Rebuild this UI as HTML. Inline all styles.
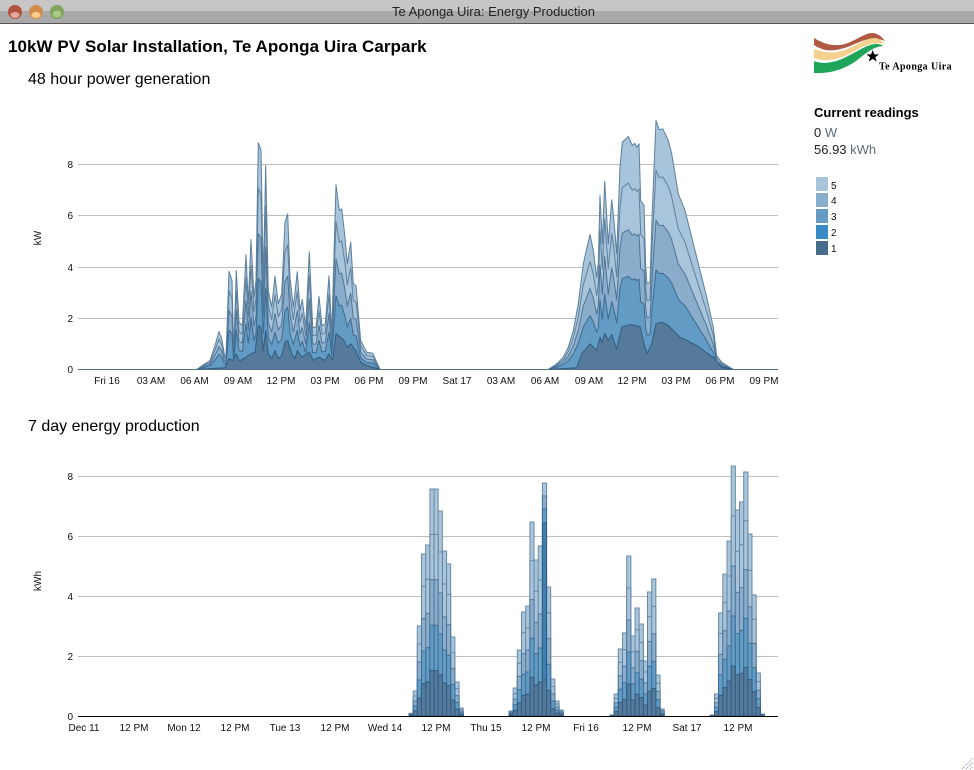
<!DOCTYPE html>
<html><head><meta charset="utf-8"><title>Te Aponga Uira: Energy Production</title>
<style>
html,body{margin:0;padding:0;background:#fff;width:974px;height:770px;overflow:hidden}
svg{display:block;font-family:"Liberation Sans",Arial,sans-serif}
.s{vector-effect:non-scaling-stroke}
.t{font-size:10px;fill:#111}
.m{text-anchor:middle}
.e{text-anchor:end}
.g{stroke:#bdbdbd;stroke-width:1}
</style></head><body>
<svg width="974" height="770" viewBox="0 0 974 770" xmlns="http://www.w3.org/2000/svg">
<defs>
<path id="a" class="s" d="M196.7 0L203.3-4.7 210-9 215-24 219-38 221.7-30.7 224.3-15.7 226-12.3 229-98.3 232-89 233.7-18 236.3-99 239-47.3 242.3-44 246-114.7 248.3-65.7 251-130 254-72.3 256-89 258.3-226.7 261-219 263.3-89 265.7-204 268.3-79 271.7-62.3 275-93.3 278.3-65.7 281.7-75.7 285-147.3 287.7-155.7 290-92.3 293.3-62.3 297.3-97.7 300-59 302.3-70 305.7-42.3 309.3-117.7 312.7-42.3 316-42.3 319-73 322-44 325.3-45.7 329-93.7 331.7-35.7 336-184.7 339.3-159 341.7-160.7 345-132.3 347.3-105.7 350.7-127.3 353.3-85.7 356-84 360.7-29 366.7-17.3 372.7-16.3 380 0Z"/>
<path id="b" class="s" d="M548.3 0L556.7-5.7 563.3-12.3 568.3-22.3 573.3-39 578.3-65.7 583.3-105.7 590-135 593.3-119 596.7-92.3 598.3-105.7 600-174 602.3-125.7 604.7-188.3 608.3-125.7 611.7-169.7 614-149 616.7-115.7 618.3-159 620-202.3 622.3-227.3 628.3-233 632.3-224 634.7-226.3 636.7-222.3 639-225.7 640.7-169 644-164 645.7-102.3 647-85.7 650-87.3 652.3-159 656-249 659.3-239.7 662.7-240.7 668.3-229 671.7-215.7 678.3-175.7 685-159 696.7-112.3 706.7-72.3 713.3-42.3 716.7-14 721.7-7.3 733.3 0Z"/>
<path id="c" class="s" d="M409 0v-2.7h4.17v2.7zM413.2 0v-25h4.17v25zM417.3 0v-90h4.17v90zM421.5 0v-162h4.17v162zM425.7 0v-171h4.17v171zM429.9 0v-227h4.17v227zM434 0v-227h4.17v227zM438.2 0v-205h4.17v205zM442.4 0v-165h4.17v165zM446.5 0v-152h4.17v152zM450.7 0v-79h4.17v79zM454.9 0v-34h4.17v34zM459 0v-8h4.17v8zM509 0v-5h4.17v5zM513.2 0v-28h4.17v28zM517.3 0v-66h4.17v66zM521.5 0v-104h4.17v104zM525.7 0v-110h4.17v110zM529.9 0v-194h4.17v194zM534 0v-156h4.17v156zM538.2 0v-170h4.17v170zM542.4 0v-233h4.17v233zM546.5 0v-129h4.17v129zM550.7 0v-37h4.17v37zM554.9 0v-15h4.17v15zM559 0v-6h4.17v6zM610 0v-1h4.17v1zM614.2 0v-22h4.17v22zM618.3 0v-67h4.17v67zM622.5 0v-83h4.17v83zM626.7 0v-160h4.17v160zM630.9 0v-80h4.17v80zM635 0v-108h4.17v108zM639.2 0v-92h4.17v92zM643.4 0v-55h4.17v55zM647.5 0v-124h4.17v124zM651.7 0v-137h4.17v137zM655.9 0v-41h4.17v41zM660 0v-7h4.17v7zM710.3 0v-1h4.17v1zM714.5 0v-22h4.17v22zM718.6 0v-103h4.17v103zM722.8 0v-142h4.17v142zM727 0v-175h4.17v175zM731.2 0v-250h4.17v250zM735.3 0v-206h4.17v206zM739.5 0v-214h4.17v214zM743.7 0v-244h4.17v244zM747.8 0v-182h4.17v182zM752 0v-121h4.17v121zM756.2 0v-43h4.17v43zM760.3 0v-2h4.17v2z"/>
</defs>

<!-- title bar -->
<rect x="0" y="0" width="974" height="11" fill="#c6c6c6"/>
<rect x="0" y="11" width="974" height="12" fill="#a9a9a9"/>
<rect x="0" y="23" width="974" height="1" fill="#555"/>
<circle cx="15" cy="12" r="7" fill="#b0533f"/><ellipse cx="15" cy="15" rx="4.5" ry="3" fill="#e4a79c"/>
<circle cx="36" cy="12" r="7" fill="#d08c4b"/><ellipse cx="36" cy="15" rx="4.5" ry="3" fill="#fbcf8e"/>
<circle cx="57" cy="12" r="7" fill="#7fa35c"/><ellipse cx="57" cy="14" rx="4.5" ry="3.5" fill="#a8c984"/>
<text x="493.5" y="16" text-anchor="middle" font-size="13" fill="#222">Te Aponga Uira: Energy Production</text>

<!-- headings -->
<text x="8" y="52" font-size="17" font-weight="bold" letter-spacing=".06" fill="#000">10kW PV Solar Installation, Te Aponga Uira Carpark</text>
<text x="28" y="84" font-size="16" fill="#000">48 hour power generation</text>
<text x="28" y="431" font-size="16" fill="#000">7 day energy production</text>

<!-- chart 1 grid -->
<path class="g" d="M78 164.5H778M78 215.5H778M78 267.5H778M78 318.5H778"/>
<text class="t e" x="73" y="168">8</text><text class="t e" x="73" y="219">6</text><text class="t e" x="73" y="271">4</text><text class="t e" x="73" y="322">2</text><text class="t e" x="73" y="373">0</text>
<text class="t m" transform="translate(41,238) rotate(-90)">kW</text>

<!-- chart 1 areas -->
<g stroke="#5b7f9c" stroke-width="1" stroke-linejoin="round">
<g fill="#a7c4db">
<use href="#a" transform="translate(0,369.5)"/><use href="#b" transform="translate(0,369.5)"/>
</g>
<g fill="#a9c5dc" stroke="#5f809c">
<use href="#a" transform="translate(0,369.5) scale(1,.8)"/><use href="#b" transform="translate(0,369.5) scale(1,.8)"/>
</g>
<g fill="#8aadcc" stroke="#4e7395">
<use href="#a" transform="translate(0,369.5) scale(1,.6)"/><use href="#b" transform="translate(0,369.5) scale(1,.6)"/>
</g>
<g fill="#629cc5" stroke="#3d6a90">
<use href="#a" transform="translate(0,369.5) scale(1,.4)"/><use href="#b" transform="translate(0,369.5) scale(1,.4)"/>
</g>
<path fill="#567a99" stroke="#2f5c82" d="M196.7 369.5L225 367.8 229 358.8 232.7 360.5 236.3 353.8 239.3 361.2 246 357.2 251 353.8 255 352.2 258.3 325.5 261 327.2 263.3 350.5 265.7 330.5 268.3 353.8 271.7 358.8 275 350.5 278.3 358.8 281.7 355.5 285 342.2 287.7 340.5 291.7 353.8 295 358.8 297.3 350.5 301.7 357.2 309.3 352.2 313.3 360.5 319 357.2 325 360.5 329 353.8 332.7 360.5 336 333.5 343.3 339.5 347.3 347.2 350.7 343.8 356 350.5 360.7 362.2 366.7 365.5 380 369.5Z"/>
<path fill="#567a99" stroke="#2f5c82" d="M548.3 369.5L576.7 367.8 581.7 353.8 590 343.8 596.7 350.5 600 337.2 602.3 342.2 604.7 333.2 608.3 340.5 611.7 334.5 616.7 348.8 621.7 327.2 630 324.5 640 326.5 644 343.8 647 353.8 651.7 343.8 656 323.8 661.7 322.2 668.3 325.5 680 337.2 696.7 345.5 715 358.8 721.7 367.2 733.3 369.5Z"/>
</g>
<path stroke="#4f6f8c" stroke-width="1" d="M78 369.5H778"/>

<!-- chart 1 x labels -->
<g text-anchor="middle" font-size="10" fill="#111">
<text x="107" y="384">Fri 16</text><text x="151" y="384">03 AM</text><text x="194.5" y="384">06 AM</text><text x="238" y="384">09 AM</text><text x="281" y="384">12 PM</text><text x="325" y="384">03 PM</text><text x="369" y="384">06 PM</text><text x="413" y="384">09 PM</text><text x="457" y="384">Sat 17</text><text x="501" y="384">03 AM</text><text x="545" y="384">06 AM</text><text x="589" y="384">09 AM</text><text x="632" y="384">12 PM</text><text x="676" y="384">03 PM</text><text x="720" y="384">06 PM</text><text x="764" y="384">09 PM</text>
</g>

<!-- chart 2 grid -->
<path class="g" d="M78 476.5H778M78 536.5H778M78 596.5H778M78 656.5H778"/>
<text class="t e" x="73" y="480">8</text><text class="t e" x="73" y="540">6</text><text class="t e" x="73" y="600">4</text><text class="t e" x="73" y="660">2</text><text class="t e" x="73" y="720">0</text>
<text class="t m" transform="translate(41,581) rotate(-90)">kWh</text>

<!-- chart 2 bars -->
<g stroke-width="1">
<use href="#c" transform="translate(0,716)" fill="#a8c5dc" stroke="#6b8aa4"/>
<use href="#c" transform="translate(0,716) scale(1,.8)" fill="#a8c5dc" stroke="#6585a0"/>
<use href="#c" transform="translate(0,716) scale(1,.6)" fill="#8aadcc" stroke="#527797"/>
<use href="#c" transform="translate(0,716) scale(1,.4)" fill="#629cc5" stroke="#3f6d94"/>
<use href="#c" transform="translate(0,716) scale(1,.2)" fill="#567a99" stroke="#2f5c82"/>
<rect x="542.4" y="496" width="4.17" height="13" fill="#8aadcc" stroke="#527797"/>
<rect x="542.4" y="509" width="4.17" height="14" fill="#629cc5" stroke="#3f6d94"/>
<rect x="542.4" y="523" width="4.17" height="157" fill="#3f80b0" stroke="#2f5c82"/>
</g>
<path stroke="#000" stroke-width="1" d="M78 716.5H778"/>

<!-- chart 2 x labels -->
<g text-anchor="middle" font-size="10" fill="#111">
<text x="84" y="731">Dec 11</text><text x="134" y="731">12 PM</text><text x="184" y="731">Mon 12</text><text x="235" y="731">12 PM</text><text x="285" y="731">Tue 13</text><text x="335" y="731">12 PM</text><text x="385" y="731">Wed 14</text><text x="436" y="731">12 PM</text><text x="486" y="731">Thu 15</text><text x="536" y="731">12 PM</text><text x="586" y="731">Fri 16</text><text x="637" y="731">12 PM</text><text x="687" y="731">Sat 17</text><text x="738" y="731">12 PM</text>
</g>

<!-- logo -->
<path fill="#b05a44" d="M814 38C824 44 834 47 845 44C855 41 865 33 872 33C878 33 882 37 885 41C878 38 870 38 862 41C850 46 838 52 826 50C821 49 817 47 814 45Z"/>
<path fill="#f5d08f" d="M814 49C824 53 834 54 845 50C856 46 866 38 874 38C879 38 882 41 884 44C876 42 868 44 860 48C848 55 836 61 825 60C820 60 817 59 814 58Z"/>
<path fill="#1fa65a" d="M814 61C824 65 836 62 846 57C858 51 868 44 876 44C880 44 882 45 883 46C872 47 864 55 856 61C846 68 832 74 814 73Z"/>
<path fill="#000" d="M872.7 50L874.4 54.4H879L875.3 57.2L876.7 61.6L872.7 58.9L868.7 61.6L870.1 57.2L866.4 54.4H871Z"/>
<text x="879" y="69.5" font-family="'Liberation Serif',serif" font-weight="bold" font-size="10" letter-spacing=".4" fill="#000">Te Aponga Uira</text>

<!-- readings -->
<text x="814" y="117" font-size="13" font-weight="bold" fill="#000">Current readings</text>
<text x="814" y="137" font-size="13" fill="#222">0 <tspan fill="#5b6b7a">W</tspan></text>
<text x="814" y="154" font-size="13" fill="#222">56.93 <tspan fill="#5b6b7a">kWh</tspan></text>

<!-- legend -->
<rect x="816" y="177" width="12" height="14" fill="#a8c4da"/>
<rect x="816" y="193" width="12" height="14" fill="#8aadcc"/>
<rect x="816" y="209" width="12" height="14" fill="#659bc2"/>
<rect x="816" y="225" width="12" height="14" fill="#3a8bc4"/>
<rect x="816" y="241" width="12" height="14" fill="#476c8e"/>
<g font-size="10" fill="#111">
<text x="831" y="189">5</text><text x="831" y="204">4</text><text x="831" y="220">3</text><text x="831" y="236">2</text><text x="831" y="252">1</text>
</g>

<!-- resize grip -->
<path stroke="#7f93a6" stroke-width="1" stroke-dasharray="1 1" d="M962 769L973 758M966 769L973 762M970 769L973 766"/>
</svg>
</body></html>
